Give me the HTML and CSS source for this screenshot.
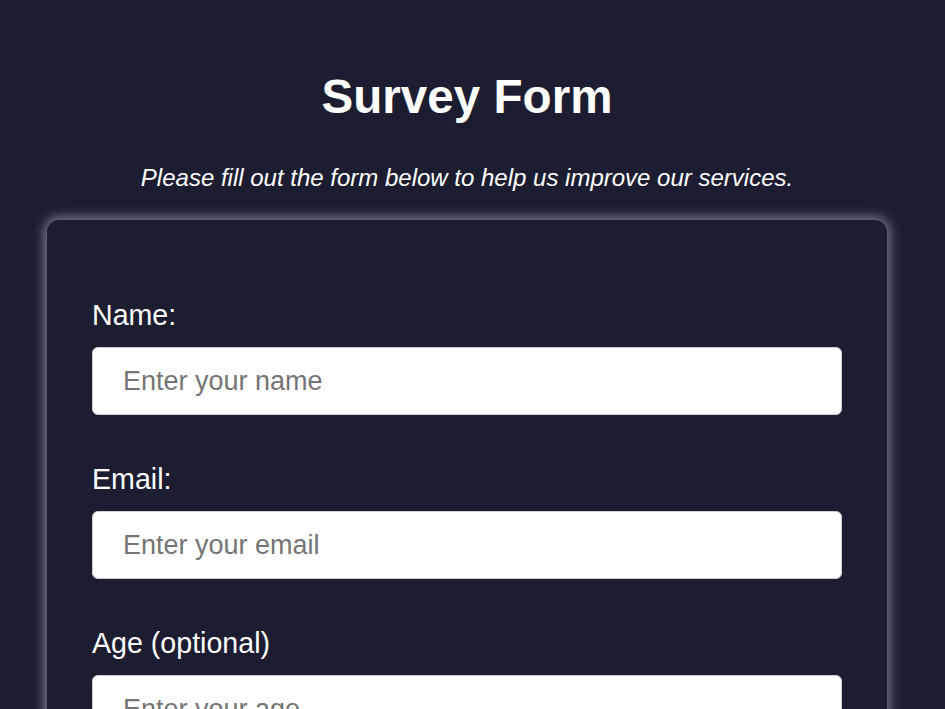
FILE: index.html
```html
<!DOCTYPE html>
<html lang="en">
<head>
<meta charset="utf-8">
<title>Survey Form</title>
<link rel="stylesheet" href="styles.css">
</head>
<body>
<h1 class="title">Survey Form</h1>
<p class="description">Please fill out the form below to help us improve our services.</p>
<form class="survey-form">
  <div class="field">
    <label class="label" for="name">Name:</label>
    <input class="input" id="name" type="text" placeholder="Enter your name">
  </div>
  <div class="field">
    <label class="label" for="email">Email:</label>
    <input class="input" id="email" type="email" placeholder="Enter your email">
  </div>
  <div class="field">
    <label class="label" for="age">Age (optional)</label>
    <input class="input" id="age" type="number" placeholder="Enter your age">
  </div>
</form>
</body>
</html>
```
FILE: styles.css
```css
html, body {
  margin: 0;
  padding: 0;
}
body {
  background: #1d1d32;
  color: #ffffff;
  font-family: "Liberation Sans", Arial, sans-serif;
  padding: 0 58px 40px 47px;
}
.title {
  margin: 0;
  padding-top: 68px;
  font-size: 47.6px;
  font-weight: bold;
  text-align: center;
  line-height: 58px;
}
.description {
  margin: 38px 0 0 0;
  font-size: 24px;
  font-style: italic;
  text-align: center;
  line-height: 28px;
}
.survey-form {
  margin-top: 28px;
  background: #1d1d32;
  border-radius: 12px;
  box-shadow: 0 0 12px 3px rgba(200, 200, 220, 0.55);
  padding: 78px 45px 40px 45px;
  display: flex;
  flex-direction: column;
  gap: 47px;
}
.field {
  display: flex;
  flex-direction: column;
}
.label {
  font-size: 28.6px;
  line-height: 34px;
  margin-bottom: 15px;
}
.input {
  box-sizing: border-box;
  height: 68px;
  width: 100%;
  border: 1px solid #cfcfd6;
  border-radius: 6px;
  background: #ffffff;
  padding: 0 30px;
  font-family: "Liberation Sans", Arial, sans-serif;
  font-size: 27px;
  color: #333;
}
.input::placeholder {
  color: #757575;
}
```
